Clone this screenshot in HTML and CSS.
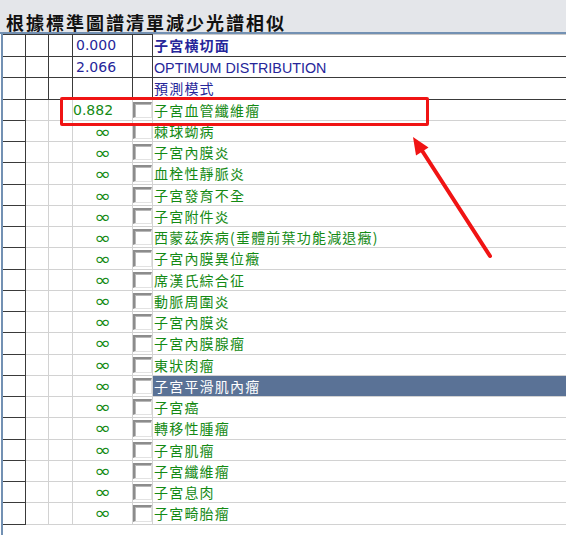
FILE: index.html
```html
<!DOCTYPE html>
<html lang="zh-Hant">
<head>
<meta charset="utf-8">
<title>根據標準圖譜清單減少光譜相似</title>
<link rel="stylesheet" href="styles.css">
</head>
<body>
<div class="title">根據標準圖譜清單減少光譜相似</div>
<div class="main">
  <div class="grid">
    <div class="row fixed first"><div class="c c1"></div><div class="c c2"></div><div class="c c3"></div><div class="c num">0.000</div><div class="c chk"></div><div class="c name"><b>子宮横切面</b></div></div>
    <div class="row fixed"><div class="c c1"></div><div class="c c2"></div><div class="c c3"></div><div class="c num">2.066</div><div class="c chk"></div><div class="c name"><span class="latin">OPTIMUM DISTRIBUTION</span></div></div>
    <div class="row fixed"><div class="c c1"></div><div class="c c2"></div><div class="c c3"></div><div class="c num"></div><div class="c chk"></div><div class="c name">預測模式</div></div>
    <div class="row"><div class="c c1"></div><div class="c c2"></div><div class="c c3"></div><div class="c num val">0.882</div><div class="c chk"><span class="box"></span></div><div class="c name">子宮血管纖維瘤</div></div>
    <div class="row"><div class="c c1"></div><div class="c c2"></div><div class="c c3"></div><div class="c num inf"><span>∞</span></div><div class="c chk"><span class="box"></span></div><div class="c name">棘球蚴病</div></div>
    <div class="row"><div class="c c1"></div><div class="c c2"></div><div class="c c3"></div><div class="c num inf"><span>∞</span></div><div class="c chk"><span class="box"></span></div><div class="c name">子宮內膜炎</div></div>
    <div class="row"><div class="c c1"></div><div class="c c2"></div><div class="c c3"></div><div class="c num inf"><span>∞</span></div><div class="c chk"><span class="box"></span></div><div class="c name">血栓性靜脈炎</div></div>
    <div class="row"><div class="c c1"></div><div class="c c2"></div><div class="c c3"></div><div class="c num inf"><span>∞</span></div><div class="c chk"><span class="box"></span></div><div class="c name">子宮發育不全</div></div>
    <div class="row"><div class="c c1"></div><div class="c c2"></div><div class="c c3"></div><div class="c num inf"><span>∞</span></div><div class="c chk"><span class="box"></span></div><div class="c name">子宮附件炎</div></div>
    <div class="row"><div class="c c1"></div><div class="c c2"></div><div class="c c3"></div><div class="c num inf"><span>∞</span></div><div class="c chk"><span class="box"></span></div><div class="c name">西蒙茲疾病(垂體前葉功能減退癥)</div></div>
    <div class="row"><div class="c c1"></div><div class="c c2"></div><div class="c c3"></div><div class="c num inf"><span>∞</span></div><div class="c chk"><span class="box"></span></div><div class="c name">子宮內膜異位癥</div></div>
    <div class="row"><div class="c c1"></div><div class="c c2"></div><div class="c c3"></div><div class="c num inf"><span>∞</span></div><div class="c chk"><span class="box"></span></div><div class="c name">席漢氏綜合征</div></div>
    <div class="row"><div class="c c1"></div><div class="c c2"></div><div class="c c3"></div><div class="c num inf"><span>∞</span></div><div class="c chk"><span class="box"></span></div><div class="c name">動脈周圍炎</div></div>
    <div class="row"><div class="c c1"></div><div class="c c2"></div><div class="c c3"></div><div class="c num inf"><span>∞</span></div><div class="c chk"><span class="box"></span></div><div class="c name">子宮內膜炎</div></div>
    <div class="row"><div class="c c1"></div><div class="c c2"></div><div class="c c3"></div><div class="c num inf"><span>∞</span></div><div class="c chk"><span class="box"></span></div><div class="c name">子宮內膜腺瘤</div></div>
    <div class="row"><div class="c c1"></div><div class="c c2"></div><div class="c c3"></div><div class="c num inf"><span>∞</span></div><div class="c chk"><span class="box"></span></div><div class="c name">東狀肉瘤</div></div>
    <div class="row"><div class="c c1"></div><div class="c c2"></div><div class="c c3"></div><div class="c num inf"><span>∞</span></div><div class="c chk"><span class="box"></span></div><div class="c name sel">子宮平滑肌內瘤</div></div>
    <div class="row"><div class="c c1"></div><div class="c c2"></div><div class="c c3"></div><div class="c num inf"><span>∞</span></div><div class="c chk"><span class="box"></span></div><div class="c name">子宮癌</div></div>
    <div class="row"><div class="c c1"></div><div class="c c2"></div><div class="c c3"></div><div class="c num inf"><span>∞</span></div><div class="c chk"><span class="box"></span></div><div class="c name">轉移性腫瘤</div></div>
    <div class="row"><div class="c c1"></div><div class="c c2"></div><div class="c c3"></div><div class="c num inf"><span>∞</span></div><div class="c chk"><span class="box"></span></div><div class="c name">子宮肌瘤</div></div>
    <div class="row"><div class="c c1"></div><div class="c c2"></div><div class="c c3"></div><div class="c num inf"><span>∞</span></div><div class="c chk"><span class="box"></span></div><div class="c name">子宮纖維瘤</div></div>
    <div class="row"><div class="c c1"></div><div class="c c2"></div><div class="c c3"></div><div class="c num inf"><span>∞</span></div><div class="c chk"><span class="box"></span></div><div class="c name">子宮息肉</div></div>
    <div class="row"><div class="c c1"></div><div class="c c2"></div><div class="c c3"></div><div class="c num inf"><span>∞</span></div><div class="c chk"><span class="box"></span></div><div class="c name">子宮畸胎瘤</div></div>
  </div>
</div>
<div class="callout"></div>
<svg class="arrow" width="566" height="537" viewBox="0 0 566 537">
  <line x1="490" y1="256" x2="421" y2="149" stroke="#f01414" stroke-width="4" stroke-linecap="round"/>
  <polygon points="413,137 428.5,147.5 416,155.5" fill="#f01414"/>
</svg>
</body>
</html>
```
FILE: styles.css
```css
html, body {
  margin: 0;
  padding: 0;
  background: #ffffff;
}
body {
  width: 566px;
  height: 537px;
  overflow: hidden;
  position: relative;
  font-family: "Liberation Sans", "Noto Sans CJK TC", sans-serif;
}
.title {
  height: 34px;
  box-sizing: border-box;
  padding: 13px 0 0 6px;
  background: #e4e6ea;
  border-bottom: 2px solid #7391b3;
  font-family: "Noto Sans CJK TC", sans-serif;
  font-weight: 700;
  font-size: 18px;
  line-height: 18px;
  letter-spacing: 2px;
  color: #111111;
  white-space: nowrap;
}
.main {
  height: 501px;
  margin-left: 1px;
  border-left: 2px solid #7391b3;
  background: #ffffff;
}
.row {
  display: grid;
  grid-template-columns: 23px 23px 24px 60px 20px 1fr;
  height: 21.25px;
}
.c {
  box-sizing: border-box;
  border-right: 1px solid #d2d2d2;
  border-bottom: 1px solid #d2d2d2;
  overflow: hidden;
  white-space: nowrap;
  line-height: 20px;
}
.c1 {
  border-color: #3a3a3a;
}
.name {
  border-right: none;
  padding-left: 1px;
  font-family: "Noto Sans CJK TC", sans-serif;
  font-size: 14px;
  letter-spacing: 1.2px;
  color: #148a14;
  line-height: 20px;
}
.num {
  font-family: "DejaVu Sans", sans-serif;
  font-size: 14px;
  color: #148a14;
  padding-left: 0;
}
.num.inf {
  display: flex;
  align-items: center;
  justify-content: center;
}
.num.inf span {
  display: inline-block;
  font-size: 16px;
  line-height: 14px;
  transform: translateY(1px) scale(1.25, 1.1);
}
.fixed .c {
  border-color: #3a3a3a;
}
.fixed .num {
  color: #26269a;
  padding-left: 3px;
}
.fixed .name {
  color: #26269a;
}
.first .c {
  border-top: 1px solid #3a3a3a;
}
.first .name {
  border-top: 1px solid #c8c8c8;
}
.row.first {
  height: 23px;
}
.latin {
  font-family: "Liberation Sans", sans-serif;
  font-size: 14.3px;
  letter-spacing: 0;
}
.chk {
  display: flex;
  padding: 2px 0 2px 0;
}
.box {
  flex: 1;
  box-sizing: border-box;
  border-left: 2px solid #8c8c8c;
  border-top: 2px solid #8c8c8c;
  border-right: 1px solid #e2e2e2;
  border-bottom: 1px solid #e2e2e2;
  background: #ffffff;
  box-shadow: inset 1px 1px 0 #b8b8b8;
}
.sel {
  background: #5a7296;
  color: #ffffff;
}
.callout {
  position: absolute;
  left: 60px;
  top: 97px;
  width: 369px;
  height: 29px;
  box-sizing: border-box;
  border: 3px solid #f01414;
  border-radius: 2px;
}
.arrow {
  position: absolute;
  left: 0;
  top: 0;
}
```
